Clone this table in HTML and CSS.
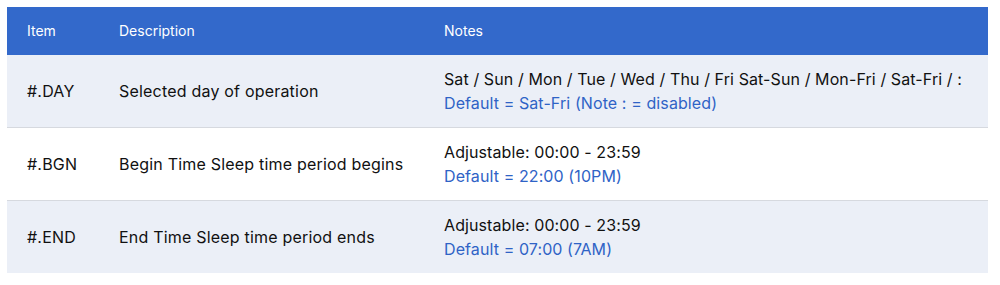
FILE: index.html
```html
<!DOCTYPE html>
<html>
<head>
<meta charset="utf-8">
<link rel="stylesheet" href="styles.css">
</head>
<body>
<table class="spec">
  <colgroup>
    <col class="c-item">
    <col class="c-desc">
    <col class="c-notes">
  </colgroup>
  <thead>
    <tr><th>Item</th><th>Description</th><th>Notes</th></tr>
  </thead>
  <tbody>
    <tr class="alt">
      <td>#.DAY</td>
      <td>Selected day of operation</td>
      <td class="notes"><div>Sat / Sun / Mon / Tue / Wed / Thu / Fri Sat-Sun / Mon-Fri / Sat-Fri / :</div><div class="def">Default = Sat-Fri (Note : = disabled)</div></td>
    </tr>
    <tr>
      <td>#.BGN</td>
      <td>Begin Time Sleep time period begins</td>
      <td class="notes"><div>Adjustable: 00:00 - 23:59</div><div class="def">Default = 22:00 (10PM)</div></td>
    </tr>
    <tr class="alt last">
      <td>#.END</td>
      <td>End Time Sleep time period ends</td>
      <td class="notes"><div>Adjustable: 00:00 - 23:59</div><div class="def">Default = 07:00 (7AM)</div></td>
    </tr>
  </tbody>
</table>
</body>
</html>
```
FILE: styles.css
```css
html, body { background: #ffffff; }
body {
  margin: 7px;
  font-family: Inter, "Noto Sans", sans-serif;
  color: #111111;
}
.spec {
  width: 981px;
  border-collapse: collapse;
  table-layout: fixed;
}
.c-item { width: 92px; }
.c-desc { width: 325px; }
.spec th {
  background: #3369cb;
  color: #ffffff;
  font-weight: 400;
  font-size: 14px;
  line-height: 20px;
  text-align: left;
  padding: 14px 20px;
}
.spec td {
  font-size: 16px;
  letter-spacing: 0.2px;
  line-height: 24px;
  padding: 12px 20px;
  vertical-align: middle;
  border-bottom: 1px solid #d6d9df;
}
.spec td.notes {
  letter-spacing: 0.1px;
  white-space: nowrap;
}
.spec tr.last td { border-bottom: none; }
.spec tr.alt td { background: #ebeff7; }
.def { color: #2f63c6; }
```
